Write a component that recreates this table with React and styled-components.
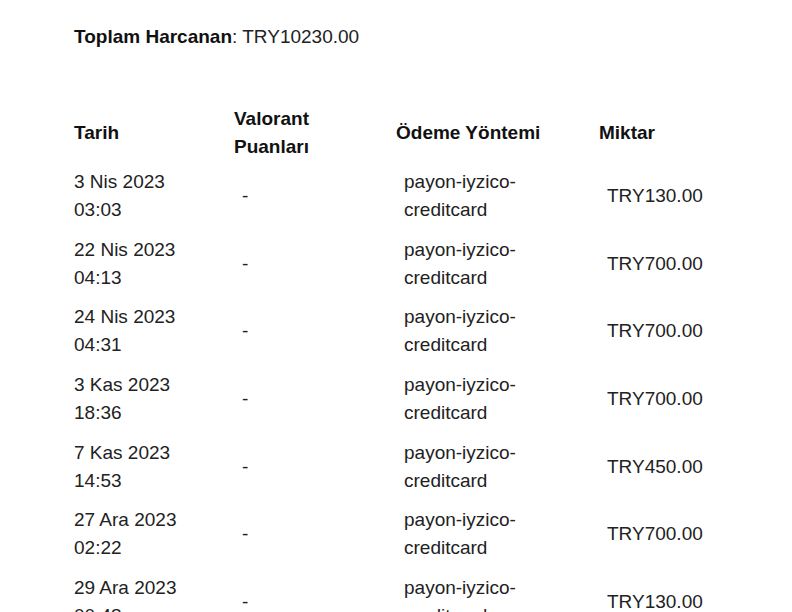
import React from "react";
import styled, { createGlobalStyle } from "styled-components";

const GlobalStyle = createGlobalStyle`
  body {
    margin: 0;
    background: #fff;
    font-family: "Liberation Sans", Arial, sans-serif;
    color: #222;
  }
`;

const Wrap = styled.div`
  padding: 23px 0 0 74px;
  font-size: 19px;
  line-height: 28px;
`;

const Total = styled.div`
  margin-bottom: 54px;
`;

const Label = styled.span`
  font-weight: bold;
  color: #111;
`;

const Table = styled.table`
  border-collapse: collapse;
  table-layout: fixed;
  width: 680px;
`;

const Th = styled.th`
  text-align: left;
  vertical-align: middle;
  font-weight: bold;
  color: #111;
  padding: 0 0 1px;
  width: ${(props) => props.$width}px;
`;

const Td = styled.td`
  vertical-align: middle;
  padding: 6px 0 5.67px ${(props) => (props.$indent ? 8 : 0)}px;
`;

const rows = [
  ["3 Nis 2023", "03:03", "TRY130.00"],
  ["22 Nis 2023", "04:13", "TRY700.00"],
  ["24 Nis 2023", "04:31", "TRY700.00"],
  ["3 Kas 2023", "18:36", "TRY700.00"],
  ["7 Kas 2023", "14:53", "TRY450.00"],
  ["27 Ara 2023", "02:22", "TRY700.00"],
  ["29 Ara 2023", "00:48", "TRY130.00"],
];

function App() {
  return (
    <>
      <GlobalStyle />
      <Wrap>
        <Total>
          <Label>Toplam Harcanan</Label>: TRY10230.00
        </Total>
        <Table>
          <thead>
            <tr>
              <Th $width={160}>Tarih</Th>
              <Th $width={162}>
                Valorant
                <br />
                Puanları
              </Th>
              <Th $width={203}>Ödeme Yöntemi</Th>
              <Th $width={155}>Miktar</Th>
            </tr>
          </thead>
          <tbody>
            {rows.map(([date, time, amount], i) => (
              <tr key={i}>
                <Td>
                  {date}
                  <br />
                  {time}
                </Td>
                <Td $indent>-</Td>
                <Td $indent>
                  payon-iyzico-
                  <br />
                  creditcard
                </Td>
                <Td $indent>{amount}</Td>
              </tr>
            ))}
          </tbody>
        </Table>
      </Wrap>
    </>
  );
}

export default App;
